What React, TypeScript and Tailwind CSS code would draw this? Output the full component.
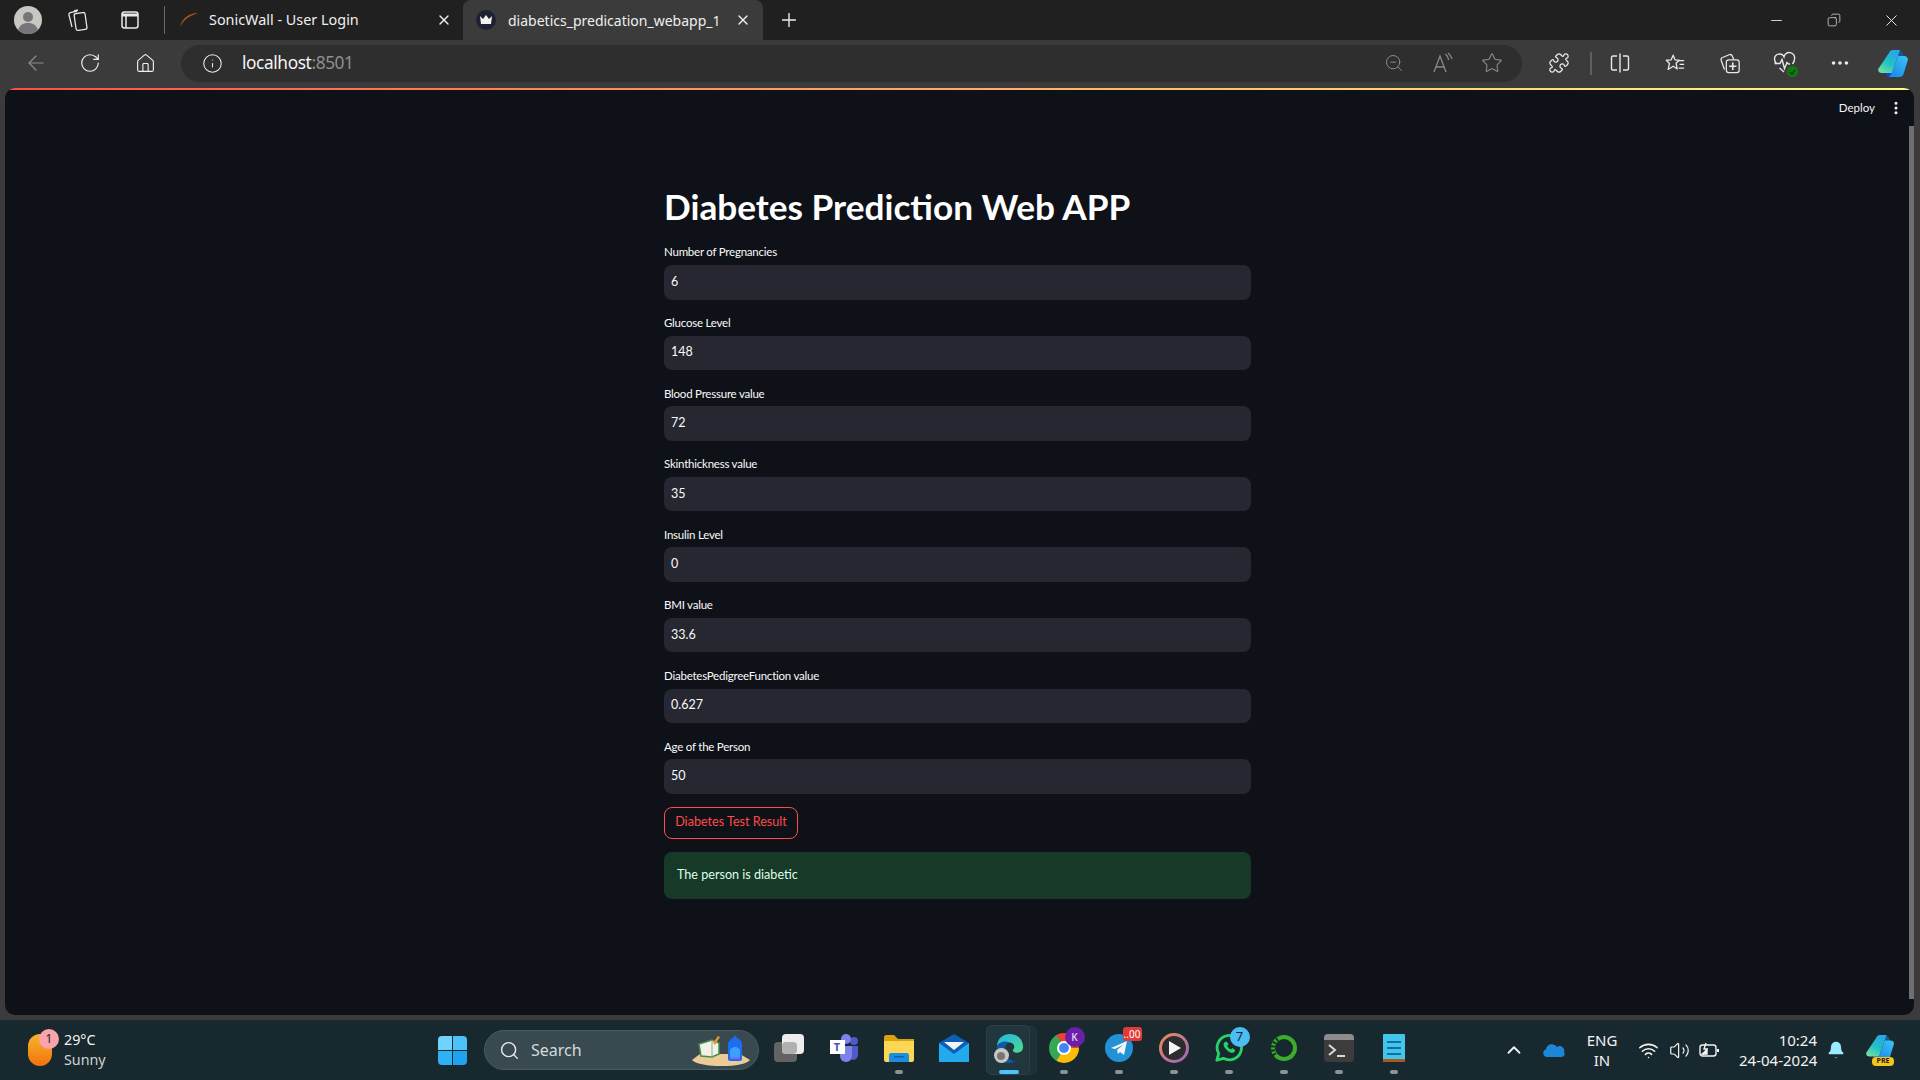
import {
  ArrowLeft,
  Bell,
  ChevronUp,
  Copy,
  EllipsisVertical,
  Home,
  Info,
  Minus,
  MoreHorizontal,
  Plus,
  Puzzle,
  RotateCw,
  Search,
  Star,
  Volume2,
  Wifi,
  X,
  ZoomOut,
} from "lucide-react";

const fields = [
  ["Number of Pregnancies", "6"],
  ["Glucose Level", "148"],
  ["Blood Pressure value", "72"],
  ["Skinthickness value", "35"],
  ["Insulin Level", "0"],
  ["BMI value", "33.6"],
  ["DiabetesPedigreeFunction value", "0.627"],
  ["Age of the Person", "50"],
];

const Avatar = () => (
  <svg width="28" height="28" viewBox="0 0 28 28">
    <circle cx="14" cy="14" r="14" fill="#c9c7c2" />
    <circle cx="14" cy="11" r="5" fill="#77757a" />
    <path d="M4 24c2-6 6-7 10-7s8 1 10 7a14 14 0 0 1-20 0z" fill="#77757a" />
  </svg>
);

const TabsIcon = () => (
  <svg width="22" height="24" viewBox="0 0 22 24" fill="none" stroke="#e4e4e4" strokeWidth="1.3">
    <rect x="9" y="5" width="11" height="17" rx="2" transform="rotate(-8 14 13)" />
    <path d="M6 19 3 7c-.3-1 .2-2 1.3-2.3L11 3" />
    <path d="M8 3l4-1" />
  </svg>
);

const VerticalTabsIcon = () => (
  <svg width="20" height="20" viewBox="0 0 20 20" fill="none" stroke="#e8e8e8" strokeWidth="1.5">
    <rect x="2" y="2" width="16" height="16" rx="2.5" />
    <path d="M2 5h16" strokeWidth="3" />
    <path d="M6 6v12" />
  </svg>
);

const SonicFavicon = () => (
  <svg width="20" height="16" viewBox="0 0 20 16">
    <path d="M19 1C10 1 3 6 1 15c3-6 7-9 11-11 2-1 5-2 7-3z" fill="#a5501f" />
  </svg>
);

const StreamlitFavicon = () => (
  <div className="flex h-5 w-5 items-center justify-center rounded-full bg-[#1d2233]">
    <svg width="14" height="12" viewBox="0 0 14 12">
      <path d="M1 2l3 3 3-4 3 4 3-3-1 8H2z" fill="#f2f2f2" />
    </svg>
  </div>
);

const ReadAloud = () => (
  <svg width="24" height="24" viewBox="0 0 24 24" fill="none" stroke="#8a8a8a" strokeWidth="1.3">
    <path d="M3 21 9 5l6 16M5 16h8" />
    <path d="M14 3c2 1 3 3 3.5 6M17 2c2 1.5 3.500 3.500 4 6" />
  </svg>
);

const SplitScreen = () => (
  <svg width="22" height="22" viewBox="0 0 22 22" fill="none" stroke="#e8e8e8" strokeWidth="1.4">
    <path d="M8 4H4a1.5 1.5 0 0 0-1.5 1.5v11A1.5 1.5 0 0 0 4 18h4" />
    <path d="M14 4h4a1.5 1.5 0 0 1 1.5 1.5v11A1.5 1.5 0 0 1 18 18h-4" />
    <path d="M11 1.5v19" />
  </svg>
);

const Favorites = () => (
  <svg width="24" height="24" viewBox="0 0 24 24" fill="none" stroke="#e8e8e8" strokeWidth="1.4">
    <path d="M10 3.5l2 5 4.5.5-3.300 3.300 1.200 6.200-4.400-3-5.500 3.500 1.500-6.500L2.500 9l5.300-.5z" strokeLinejoin="round" />
    <path d="M16 9.5h6M17 13.5h5M16 17.5h6" />
  </svg>
);

const Collections = () => (
  <svg width="24" height="24" viewBox="0 0 24 24" fill="none" stroke="#e8e8e8" strokeWidth="1.4">
    <path d="M6 19 2.500 9.500C2 8 2.500 6.500 4 6L11 3c1.500-.5 3 0 3.500 1.500L16 8" />
    <rect x="8" y="8.5" width="14" height="14" rx="2.5" />
    <path d="M15 11.5v8M11 15.5h8" strokeWidth="1.8" />
  </svg>
);

const Health = () => (
  <div className="relative h-6 w-6">
    <svg width="24" height="24" viewBox="0 0 24 24" fill="none" stroke="#e8e8e8" strokeWidth="1.4">
      <path d="M3.5 13C2 11 1.5 9.500 1.5 8a5 5 0 0 1 9.500-2.200A5 5 0 0 1 21.500 8c0 1.500-.8 3.500-2 5" />
      <path d="M1.5 12.500H7l2-4 2.500 9 2.500-6 1.500 1.500H17" />
      <path d="M6.500 17l4.500 4" />
    </svg>
    <div className="absolute -right-[1px] bottom-[-2px] flex h-[11px] w-[11px] items-center justify-center rounded-full bg-[#107c10]">
      <svg width="7" height="6" viewBox="0 0 7 6" fill="none" stroke="#062b06" strokeWidth="1.2">
        <path d="M1 3l2 2 3-4" />
      </svg>
    </div>
  </div>
);

const CopilotLogo = ({ id, size = 30 }: { id: string; size?: number }) => (
  <svg width={size} height={(size * 27) / 30} viewBox="0 0 30 27">
    <defs>
      <linearGradient id={id + "A"} x1="0.7" y1="0" x2="0.2" y2="1">
        <stop offset="0" stopColor="#2aa4ea" />
        <stop offset="0.55" stopColor="#22c2c4" />
        <stop offset="1" stopColor="#6fe0a3" />
      </linearGradient>
      <linearGradient id={id + "B"} x1="0.9" y1="0" x2="0.2" y2="1">
        <stop offset="0" stopColor="#3cc0f5" />
        <stop offset="1" stopColor="#1a8bea" />
      </linearGradient>
    </defs>
    <path d="M15 0h5c3 0 4 2 5 4l2 4H18z" fill="#0d5d8f" />
    <path d="M9 20h7l-2 7h-3c-2 0-3-2-3-4z" fill="#1b3fd0" />
    <path d="M11 3c.5-2 2-3 4-3h7l-8 23H4c-3 0-4.500-2-3.500-4.500z" fill={`url(#${id}A)`} />
    <path d="M20 6h6c3 0 4.500 2 3.700 4.500L25.500 24c-.7 2-2 3-4 3H11l3-4z" fill={`url(#${id}B)`} />
  </svg>
);

const WindowsLogo = () => (
  <div className="grid h-[29px] w-[29px] grid-cols-2 gap-[1px]">
    <div className="rounded-tl-sm bg-[#6fd3fb]" />
    <div className="rounded-tr-sm bg-[#4cc2fa]" />
    <div className="rounded-bl-sm bg-[#2fb2f5]" />
    <div className="rounded-br-sm bg-[#1fa3f0]" />
  </div>
);

const SearchArt = () => (
  <svg width="58" height="34" viewBox="0 0 58 34">
    <path d="M0 27 8 21h40l10 6c-4 4-14 6-28 6S4 31 0 27z" fill="#eccb97" />
    <path d="M7 11l13-4 7 3 0 11-7 3-11-1z" fill="#f2f2e8" stroke="#3f8f4a" strokeWidth="1.5" />
    <path d="M20 7v17" stroke="#9aa68f" strokeWidth="1" />
    <path d="M21 10l5-7 2 1-5 8z" fill="#f0912c" />
    <path d="M36 12c0-4 3-6 5-7l2-3 2 3c3 1 5 3 5 7v14c0 1-1 2-2 2H38c-1 0-2-1-2-2z" fill="#1a6ff0" />
    <path d="M38 18c0-3 3-4 5-4s5 1 5 4v7H38z" fill="#3fa0f8" />
    <path d="M38 24h10v2H38z" fill="#7a6cf0" />
  </svg>
);

const TaskView = () => (
  <div className="relative h-[28px] w-[30px]">
    <div className="absolute bottom-0 left-0 h-5 w-[23px] rounded-sm bg-[#636363]" />
    <div className="absolute right-0 top-0 h-5 w-[22px] rounded-sm bg-[#ededed]" />
    <div className="absolute left-[8px] top-[8px] h-3 w-[15px] rounded-sm bg-[#b0b0b0]" />
  </div>
);

const Teams = () => (
  <div className="relative h-7 w-7">
    <div className="absolute right-0 top-[3px] h-2 w-2 rounded-full bg-[#5059c9]" />
    <div className="absolute left-[11px] top-0 h-2.5 w-2.5 rounded-full bg-[#7b83eb]" />
    <div className="absolute right-0 top-[12px] h-3.5 w-2.5 rounded-b-full bg-[#5059c9]" />
    <div className="absolute left-[10px] top-[12px] h-4 w-3 rounded-b-lg bg-[#7b83eb]" />
    <div className="absolute left-0 top-[6px] flex h-[14px] w-[15px] items-center justify-center bg-white text-[11px] font-bold text-[#4b53bc]">
      T
    </div>
  </div>
);

const Folder = () => (
  <svg width="30" height="28" viewBox="0 0 30 28">
    <path d="M0 3c0-1 1-2 2-2h8l4 4h16v6H0z" fill="#dba010" />
    <path d="M0 7h30v19c0 1-1 2-2 2H2c-1 0-2-1-2-2z" fill="#fcd655" />
    <path d="M5 21c0-1 1-2 2-2h16c1 0 2 1 2 2v7H5z" fill="#1a8ee0" />
    <rect x="10" y="22" width="10" height="1.5" fill="#0f5fb0" />
  </svg>
);

const Mail = () => (
  <svg width="30" height="28" viewBox="0 0 30 28">
    <path d="M15 0 30 9v19H0V9z" fill="#0d5fb5" />
    <path d="M5 8h20l-10 8z" fill="#f4f4f4" />
    <path d="M0 9l15 11 15-11v19H0z" fill="#23a9ee" />
  </svg>
);

const Edge = () => (
  <div className="relative h-[30px] w-[30px]">
    <svg width="30" height="30" viewBox="0 0 30 32">
      <defs>
        <linearGradient id="edgeA" x1="0" y1="0" x2="1" y2="1">
          <stop offset="0" stopColor="#1fb6e8" />
          <stop offset="1" stopColor="#4edb8b" />
        </linearGradient>
      </defs>
      <path d="M2 14C3 5 9 1 16 1c8 0 14 6 14 14 0 4-3 6-6 6-3 0-5-1-5-3 3-2 2-8-4-8-5 0-11 0-13 4z" fill="url(#edgeA)" />
      <path d="M2 14c3-5 9-6 13-4-4 2-6 7-4 12 1 3 5 8 11 8-2 1-5 2-8 2C6 32 1 24 2 14z" fill="#0c59a4" />
    </svg>
    <div className="absolute left-0 bottom-0 flex h-[15px] w-[15px] items-center justify-center rounded-full bg-[#c9c7c2]">
      <div className="h-2 w-2 rounded-full bg-[#77757a]" />
    </div>
  </div>
);

const Chrome = () => (
  <div className="relative h-[30px] w-[30px]">
    <div className="h-[30px] w-[30px] rounded-full bg-[conic-gradient(from_330deg,#ea4335_0deg_120deg,#fbbc05_120deg_240deg,#34a853_240deg_360deg)]" />
    <div className="absolute left-[8px] top-[8px] h-[14px] w-[14px] rounded-full border-2 border-white bg-[#4285f4]" />
    <div className="absolute -right-[6px] -top-[6px] flex h-5 w-5 items-center justify-center rounded-full bg-[#6a1fa8] text-[10px] font-semibold text-[#dcc4f0]">
      K
    </div>
  </div>
);

const Telegram = () => (
  <div className="relative h-7 w-7">
    <div className="flex h-7 w-7 items-center justify-center rounded-full bg-[#2291d6]">
      <svg width="16" height="14" viewBox="0 0 16 14">
        <path d="M0 7 16 0l-3 14-4-3-2 2-1-4 6-5-8 4z" fill="#f2f7fb" />
      </svg>
    </div>
    <div className="absolute -right-[9px] -top-[7px] flex h-[14px] w-[19px] items-center justify-center rounded-[3px] bg-[#e53935] text-[10px] text-white">
      ..00
    </div>
  </div>
);

const Player = () => (
  <div className="flex h-[30px] w-[30px] items-center justify-center rounded-full bg-gradient-to-br from-[#f08a3c] to-[#9a5fc0]">
    <div className="flex h-6 w-6 items-center justify-center rounded-full bg-[#2c2c30]">
      <svg width="12" height="14" viewBox="0 0 12 14" className="ml-[2px]">
        <path d="M0 0 12 7 0 14z" fill="#f4f4f4" />
      </svg>
    </div>
  </div>
);

const WhatsApp = () => (
  <div className="relative h-[30px] w-[30px]">
    <svg width="30" height="30" viewBox="0 0 32 32" fill="none">
      <path d="M3 29l2-7a13 13 0 1 1 5 5z" stroke="#25d366" strokeWidth="3" strokeLinejoin="round" />
      <path d="M11 10c-1 1-1 3 0 5 2 3 4 5 7 6 2 .5 3 0 4-1l.5-2-3-2-1.500 1.500c-2-1-3-2-4-4l1.500-1.500-2-3z" fill="#25d366" />
    </svg>
    <div className="absolute -right-[6px] -top-[6px] flex h-5 w-5 items-center justify-center rounded-full bg-[#4cbcf5] text-[13px] text-[#10242a]">
      7
    </div>
  </div>
);

const GreenRing = () => (
  <svg width="28" height="30" viewBox="0 0 28 30" fill="none">
    <circle cx="14" cy="15" r="11" stroke="#3dac2c" strokeWidth="4" />
    <path d="M5 22A11 11 0 0 1 8 6" stroke="#12331c" strokeWidth="4" strokeDasharray="2 2" />
  </svg>
);

const Terminal = () => (
  <div className="h-7 w-[30px] overflow-hidden rounded-sm bg-[#3c3c3c]">
    <div className="h-1.5 bg-[#8c8c8c]" />
    <svg width="30" height="22" viewBox="0 0 30 22" fill="none" stroke="#d8d8d8" strokeWidth="2">
      <path d="M5 5l6 5-6 5M13 16h8" />
    </svg>
  </div>
);

const Notepad = () => (
  <svg width="22" height="30" viewBox="0 0 22 30">
    <rect x="0" y="1" width="22" height="26" rx="1" fill="#43c5ea" />
    <rect x="0" y="26" width="22" height="3" fill="#a75a1f" />
    <path d="M4 8h14v2H4zM4 14h14v2H4zM4 20h14v2H4z" fill="#0e6fa5" />
  </svg>
);

const TaskbarApp = ({
  children,
  active,
  running = true,
}: {
  children: React.ReactNode;
  active?: boolean;
  running?: boolean;
}) => (
  <div className="relative flex h-[60px] w-[55px] items-center justify-center pb-[4px]">
    {active && (
      <>
        <div className="absolute left-[9px] top-[6px] h-[49px] w-[47px] rounded-md border border-[#23363b] bg-[#1c3035]" />
        <div className="absolute left-[5px] top-[5px] h-[50px] w-[44px] rounded-md border border-[#2d4146] bg-[#21373d]" />
      </>
    )}
    <div className="relative">{children}</div>
    {running && (
      <div
        className={
          active
            ? "absolute bottom-[6px] h-[4px] w-[20px] rounded-full bg-[#4cc2ff]"
            : "absolute bottom-[6px] h-[4px] w-[8px] rounded-full bg-[#8a9496]"
        }
      />
    )}
  </div>
);

const App = () => {
  return (
    <div className="flex h-screen w-screen flex-col overflow-hidden bg-[#3b3b3b] font-['Noto_Sans',sans-serif] text-white">
      {/* tab strip */}
      <div className="flex h-10 shrink-0 items-center bg-[#202020]">
        <div className="flex w-[53px] justify-center pl-[3px]">
          <Avatar />
        </div>
        <div className="flex w-[48px] justify-center">
          <TabsIcon />
        </div>
        <div className="flex w-[58px] justify-center">
          <VerticalTabsIcon />
        </div>
        <div className="ml-[5px] h-7 w-px bg-[#6a6a6a]" />
        <div className="flex h-10 w-[298px] items-center pl-[14px]">
          <SonicFavicon />
          <span className="ml-[10px] flex-1 text-[14.4px] text-[#efefef]">SonicWall - User Login</span>
          <X size={16} className="mr-[11px] text-[#eeeeee]" />
        </div>
        <div className="flex h-10 w-[300px] items-center rounded-t-lg bg-[#3b3b3b] pl-[13px]">
          <StreamlitFavicon />
          <span className="ml-[12px] w-[213px] overflow-hidden whitespace-nowrap text-[14px] text-[#efefef]">
            diabetics_predication_webapp_1
          </span>
          <X size={16} className="ml-[14px] text-[#eeeeee]" />
        </div>
        <Plus size={22} strokeWidth={1.5} className="ml-[15px] text-[#eeeeee]" />
        <div className="flex-1" />
        <div className="flex w-[57px] justify-center">
          <Minus size={17} strokeWidth={1.2} className="text-[#eeeeee]" />
        </div>
        <div className="flex w-[57px] justify-center">
          <Copy size={14} strokeWidth={1.2} className="scale-x-[-1] text-[#eeeeee]" />
        </div>
        <div className="flex w-[58px] justify-center">
          <X size={19} strokeWidth={1.2} className="text-[#eeeeee]" />
        </div>
      </div>

      {/* toolbar */}
      <div className="flex h-12 shrink-0 items-center pb-[2px]">
        <div className="flex w-[63px] justify-center pl-[8px]">
          <ArrowLeft size={24} strokeWidth={1.2} className="text-[#8c8c8c]" />
        </div>
        <div className="flex w-[54px] justify-center">
          <RotateCw size={22} strokeWidth={1.3} className="text-[#f0f0f0]" />
        </div>
        <div className="flex w-[56px] justify-center">
          <Home size={21} strokeWidth={1.3} className="text-[#f0f0f0]" />
        </div>
        <div className="ml-[8px] flex h-[37px] w-[1341px] items-center rounded-full bg-[#2e2e2e] pl-[21px] pr-[19px]">
          <Info size={21} strokeWidth={1.2} className="text-[#ececec]" />
          <span className="ml-[19px] text-[17.3px] tracking-[-0.4px] text-[#f5f5f5]">
            localhost<span className="text-[#8e8e8e]">:8501</span>
          </span>
          <div className="flex-1" />
          <ZoomOut size={20} strokeWidth={1.2} className="text-[#8a8a8a]" />
          <div className="ml-[27px]">
            <ReadAloud />
          </div>
          <Star size={22} strokeWidth={1.2} className="ml-[26px] text-[#8a8a8a]" />
        </div>
        <div className="flex w-[68px] justify-center pl-[6px]">
          <Puzzle size={22} strokeWidth={1.4} className="text-[#e8e8e8]" />
        </div>
        <div className="h-[23px] w-[2px] bg-[#5f5f5f]" />
        <div className="ml-[17px] flex w-[22px] justify-center">
          <SplitScreen />
        </div>
        <div className="ml-[33px] flex w-[22px] justify-center">
          <Favorites />
        </div>
        <div className="ml-[33px] flex w-[22px] justify-center">
          <Collections />
        </div>
        <div className="ml-[33px] flex w-[22px] justify-center">
          <Health />
        </div>
        <div className="ml-[33px] flex w-[22px] justify-center">
          <MoreHorizontal size={22} strokeWidth={2} className="text-[#e8e8e8]" />
        </div>
        <div className="ml-[27px] flex w-[30px] justify-center">
          <CopilotLogo id="edgeCop" />
        </div>
      </div>

      {/* page */}
      <div className="ml-[5px] mr-[6px] flex h-[927px] shrink-0 flex-col overflow-hidden rounded-[10px] bg-[#0e1117]">
        <div className="h-[2px] bg-gradient-to-r from-[#ff4b4b] to-[#fffd80]" />
        <div className="relative flex-1 pl-[659px] pt-[91px] font-['Lato',sans-serif]">
          <div className="absolute right-[10px] top-[9px] flex items-center gap-[13px] text-[#f4f4f4]">
            <span className="text-[11.5px]">Deploy</span>
            <EllipsisVertical size={16} strokeWidth={2.5} />
          </div>
          <div className="absolute bottom-[16px] right-0 top-[36px] w-[5px] bg-[#6f6f74]" />
          <div className="w-[587px]">
            <h1 className="h-[55px] text-[35.2px] font-bold leading-[50px] text-white">Diabetes Prediction Web APP</h1>
            {fields.map(([label, value]) => (
              <div key={label} className="mb-[1px] h-[69.6px]">
                <div className="flex h-[29px] items-center pt-[3px] text-[11.5px] tracking-[-0.23px] text-[#fafafa]">
                  {label}
                </div>
                <div className="flex h-[34.5px] items-center rounded-lg bg-[#262730] pl-[7px] text-[12.5px] text-[#fafafa]">
                  {value}
                </div>
              </div>
            ))}
            <button className="mt-[7px] block h-[32px] w-[134px] rounded-lg border border-[#ff4b4b] text-[12.6px] text-[#ff4b4b]">
              Diabetes Test Result
            </button>
            <div className="mt-[13px] flex h-[47px] items-center rounded-lg bg-[#173928] pl-[13px] text-[12.6px] text-[#dffde9]">
              The person is diabetic
            </div>
          </div>
        </div>
      </div>

      {/* taskbar */}
      <div className="mt-[5px] flex h-[60px] shrink-0 items-center bg-[#17292e] text-[#f2f2f2]">
        <div className="relative ml-[28px] flex h-[40px] w-[24px] items-center">
          <div className="h-[32px] w-[24px] rounded-full bg-gradient-to-b from-[#f4b52a] to-[#f2700f]" />
          <div className="absolute left-[11px] top-[-1px] flex h-[20px] w-[20px] items-center justify-center rounded-full bg-[#f9a3ad] text-[12px] text-[#2b1a1d]">
            1
          </div>
        </div>
        <div className="ml-[12px] w-[70px] text-[14.3px] leading-[20px]">
          <div>29°C</div>
          <div className="text-[#cfd4d5]">Sunny</div>
        </div>
        <div className="ml-[304px] flex w-[29px] justify-center">
          <WindowsLogo />
        </div>
        <div className="ml-[17px] flex h-[40px] w-[275px] items-center rounded-full border border-[#4a5b60] bg-[#384a4f] pl-[14px] pr-[8px]">
          <Search size={21} strokeWidth={1.6} className="text-[#eaeaea]" />
          <span className="ml-[11px] flex-1 text-[16px] text-[#d5dadb]">Search</span>
          <SearchArt />
        </div>
        <div className="ml-[2px] flex">
          <TaskbarApp running={false}>
            <TaskView />
          </TaskbarApp>
          <TaskbarApp running={false}>
            <Teams />
          </TaskbarApp>
          <TaskbarApp>
            <Folder />
          </TaskbarApp>
          <TaskbarApp running={false}>
            <Mail />
          </TaskbarApp>
          <TaskbarApp active>
            <Edge />
          </TaskbarApp>
          <TaskbarApp>
            <Chrome />
          </TaskbarApp>
          <TaskbarApp>
            <Telegram />
          </TaskbarApp>
          <TaskbarApp>
            <Player />
          </TaskbarApp>
          <TaskbarApp>
            <WhatsApp />
          </TaskbarApp>
          <TaskbarApp>
            <GreenRing />
          </TaskbarApp>
          <TaskbarApp>
            <Terminal />
          </TaskbarApp>
          <TaskbarApp>
            <Notepad />
          </TaskbarApp>
        </div>
        <div className="flex-1" />
        <ChevronUp size={22} strokeWidth={2} className="mr-[18px] text-[#f2f2f2]" />
        <svg width="22" height="14" viewBox="0 0 22 14" className="mr-[20px]">
          <path d="M4 14a4 4 0 0 1-1-7.8A6 6 0 0 1 14 4a4.5 4.5 0 0 1 7 5 3 3 0 0 1-2 5z" fill="#1d86d8" />
        </svg>
        <div className="mr-[19px] w-[34px] text-center text-[15px] leading-[20px]">
          <div>ENG</div>
          <div>IN</div>
        </div>
        <Wifi size={21} strokeWidth={1.8} className="mr-[10px]" />
        <Volume2 size={21} strokeWidth={1.4} className="mr-[9px]" />
        <svg width="21" height="16" viewBox="0 0 21 16" fill="none" stroke="#f2f2f2" strokeWidth="1.4" className="mr-[19px]">
          <rect x="1" y="3" width="16" height="11" rx="2.5" />
          <path d="M19 7v3" strokeWidth="2" />
          <path d="M4 13l4-6H5l2-6" />
          <path d="M3 12h5V8z" fill="#f2f2f2" />
        </svg>
        <div className="w-[78px] text-right text-[15px] leading-[20px]">
          <div>10:24</div>
          <div className="whitespace-nowrap">24-04-2024</div>
        </div>
        <Bell size={20} fill="#9beaff" strokeWidth={0} className="ml-[9px] text-[#9beaff]" />
        <div className="relative ml-[20px] mr-[25px] h-[30px] w-[29px]">
          <CopilotLogo id="taskCop" size={28} />
          <div className="absolute bottom-[-1px] left-[6px] flex h-[9px] w-[22px] items-center justify-center rounded-sm bg-[#f5c518] text-[7px] font-bold text-[#222]">
            PRE
          </div>
        </div>
      </div>
    </div>
  );
};

export default App;
